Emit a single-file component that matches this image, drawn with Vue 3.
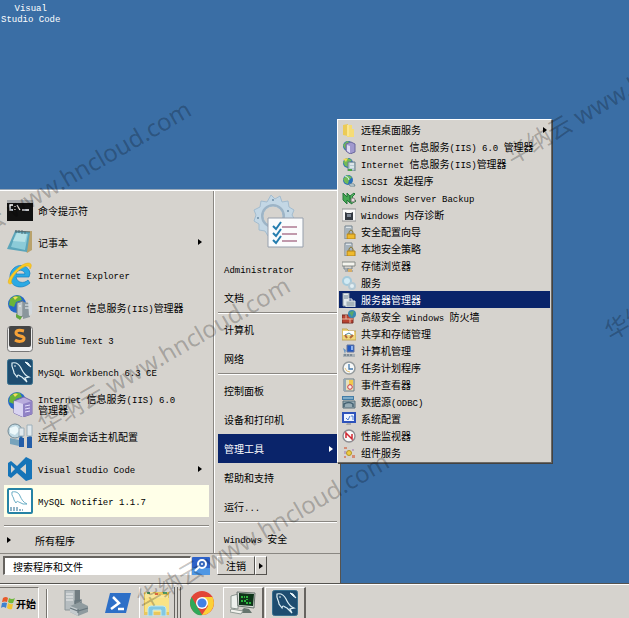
<script setup>
import { ref, h } from 'vue'

const Label = (props) =>
  h(
    'span',
    { class: 'label' },
    (props.text.match(/[\u4e00-\u9fff]+|[^\u4e00-\u9fff]+/g) || []).map((run) =>
      h('span', { class: /[\u4e00-\u9fff]/.test(run) ? 'han' : 'latin' }, run)
    )
  )
Label.props = ['text']

const search = ref('搜索程序和文件')

const globe = '<circle cx="10" cy="10" r="9" fill="#2468c8"/><path d="M3 5Q8 0 13 2L15 6 9 8 7 13 2 11Z" fill="#69b43b"/><path d="M12 9l5 1-3 7-3-3Z" fill="#8fce4c"/><path d="M6 3Q9 2 11 3L8 6Z" fill="#f6dc59"/>'
const dolphin = '<path d="M5 4C9 3 12 5 14 9 16 13 17 16 22 18L18 19 20 23 15 18C12 17 11 14 10 18L7 14C7 10 4 9 5 4Z" fill="none" stroke="#dff1f6" stroke-width="1.2"/><path d="M18 3l3 1 3 4-3-2Z" fill="#e9f6fa" stroke="#e9f6fa"/><circle cx="8" cy="7" r=".8" fill="#fff"/>'
const tower = '<path d="M3 1h7v13H3Z" fill="#dce3e8" stroke="#70808c"/><path d="M4 4h5M4 6h5M4 8h5" stroke="#6e8291"/>'
const mysql = '<rect x=".5" y=".5" width="25" height="25" rx="2" fill="#1e4d70" stroke="#38708e"/>' + dolphin

const programs = [
  { text: '命令提示符', icon: '<rect y="3" width="26" height="21" fill="#111"/><path d="M0 3h26v3H0Z" fill="#a6a8aa"/><path d="M6 8H3v5h3M8 9v1M8 12v1M10 8l3 5M15 13h7" fill="none" stroke="#fff" stroke-width="1.3"/>' },
  { text: '记事本', more: true, icon: '<path d="M8 3l17-1v19l-5 3Z" fill="#b9a26c"/><path d="M8 2l15 1-3 20L0 20Z" fill="#5ba5ba"/><path d="M9 4l12 1-3 16-14-3Z" fill="#8ccbd8"/><path d="M10 4l10 1-2 8-12-1Z" fill="#b5e1e6"/><path d="M8 2l15 1M9 1v3M12 1v3M15 1v4M18 2v3" stroke="#506d75"/>' },
  { text: 'Internet Explorer', icon: '<path d="M22 15H9c1 6 8 7 12 3l2 3C14 29 2 24 3 14 4 3 17 0 22 8q2 3 0 7M9 12h9c-1-5-8-5-9 0" fill="#2baae4" stroke="#147dbd" stroke-width=".7"/><path d="M4 22C-5 23 10 2 21 1c4 0 4 3 2 6 0-8-14 1-18 10-1 3-1 5 1 4" fill="#f9ca24" stroke="#e5a917" stroke-width=".5"/>' },
  { text: 'Internet 信息服务(IIS)管理器', icon: globe + '<path d="M10 9l6-2v15l-6 2Z" fill="#bfc7c9" stroke="#737d82"/><path d="M16 8l7 1v14l-7 2Z" fill="#8a969c"/><path d="M18 11h4M18 14h4M12 12h2" stroke="#eef7fa"/><path d="M9 20l6 3-2 3-4-3Z" fill="#62a83c"/><path d="M21 6l4 2v12l-3 2Z" fill="#d5dadd"/>' },
  { text: 'Sublime Text 3', icon: '<rect x=".5" y=".5" width="25" height="25" rx="3" fill="#eee" stroke="#777"/><rect x="2" y="0" width="22" height="21" rx="2" fill="#444"/><path d="M17 5q-8-2-8 2c0 4 9 2 8 6-1 3-6 3-9 1" fill="none" stroke="#f6a238" stroke-width="3"/>' },
  { text: 'MySQL Workbench 6.3 CE', icon: mysql },
  { text: 'Internet 信息服务(IIS) 6.0\n管理器', icon: globe + '<path d="M7 10l10-4 8 4v13l-9 3-9-4Z" fill="#b9addd" stroke="#786aad"/><path d="M7 10l9 3v13l-9-4Z" fill="#d9d4f1"/><path d="M16 13l9-3v13l-9 3Z" fill="#9183c5"/><path d="M18 15l5-1M18 18l5-1M18 21l5-1" stroke="#e7e0ff"/>' },
  { text: '远程桌面会话主机配置', icon: '<circle cx="8" cy="8" r="7" fill="#c1dae4" stroke="#738995"/><path d="M3 5l6-2 4 4-5 5-5-2Z" fill="#edf8fa"/><path d="M3 15l9 2v6l-9-2Z" fill="#77a3bb"/><path d="M14 7v17M23 2v22" stroke="#2769a9" stroke-width="3"/><path d="M12 5h5v8h-5ZM20 2h5v11h-5Z" fill="#e1e9ed" stroke="#9eb0ba"/><path d="M12 15h5v9h-5ZM20 14h5v11h-5Z" fill="#235da8"/>' },
  { text: 'Visual Studio Code', more: true, icon: '<path d="M19 1l6 3v19l-6 2-9-8-6 5-3-2V7l3-2 6 5Z" fill="#1674b8"/><path d="M19 8v10l-6-5ZM4 9v8l4-4Z" fill="#d6d3ce"/>' },
  { text: 'MySQL Notifier 1.1.7', active: true, icon: '<rect x="1" y="1" width="24" height="24" rx="1" fill="#fff" stroke="#2683a5" stroke-width="2"/><path d="M5 4C9 3 12 5 13 8 15 12 16 14 20 16L16 16 14 15C11 14 10 12 9 15L7 12C7 9 4 8 5 4Z" fill="none" stroke="#69adc5"/><path d="M3 20h8M3 22h13" stroke="#246a91" stroke-dasharray="2 1"/>' }
]

const places = [
  ['Administrator', '文档'],
  ['计算机', '网络'],
  ['控制面板', '设备和打印机', '管理工具', '帮助和支持', '运行...'],
  ['Windows 安全']
]

const smallGlobe = '<circle cx="6" cy="6" r="5" fill="#276fb8"/><path d="M1 5l4-4 5 2-3 3-1 4-3-1Z" fill="#72ba58"/>'
const lock = '<path d="M7 9V7q2-4 4 0v2" fill="none" stroke="#8a752b"/><path d="M5 9h8v5H5Z" fill="#efba2c" stroke="#af801b"/>'
const tools = [
  { text: '远程桌面服务', more: true, icon: '<path d="M1 2l5-1v12l-5-1Z" fill="#eccb56"/><path d="M5 2h5v4h2v8H5Z" fill="#f5dc76"/><path d="M6 2v11" stroke="#fff0a9"/>' },
  { text: 'Internet 信息服务(IIS) 6.0 管理器', icon: smallGlobe + '<path d="M4 4l5-2 4 2v8l-5 2-4-3Z" fill="#a099ce" stroke="#6b689d"/><path d="M5 5l3 1v7l-3-2Z" fill="#dedbf4"/>' },
  { text: 'Internet 信息服务(IIS)管理器', icon: smallGlobe + '<path d="M6 5h7v9H6Z" fill="#b8cbd3" stroke="#667f8a"/><path d="M8 7h4M8 10h4" stroke="#fff"/><path d="M1 2l5-1-2 4Z" fill="#efd857"/><path d="M6 12h4v2H6Z" fill="#4ba447"/>' },
  { text: 'iSCSI 发起程序', icon: smallGlobe + '<path d="M7 10h5l1 2H8Z" fill="#eef5f7" stroke="#6c8791"/><path d="M3 2q4 1 4 4" stroke="#d7f2ee" fill="none"/>' },
  { text: 'Windows Server Backup', icon: '<path d="M1 2l4 4V2l3 3v7L5 9v4L1 9Z" fill="#44a852" stroke="#27763b"/><path d="M13 3l-3 3 4 4-5 3-1-8 4-3Z" fill="#57b764" stroke="#27763b"/><circle cx="11" cy="9" r="2" fill="#e8dce0" stroke="#95868b"/>' },
  { text: 'Windows 内存诊断', icon: '<path d="M0 1h14v12H0Z" fill="#fafafa" stroke="#929292"/><path d="M3 4l2 1h4l2-1v8H3Z" fill="#343a42"/><path d="M5 6h4v3H5Z" fill="#7e8794"/>' },
  { text: '安全配置向导', icon: tower + lock },
  { text: '本地安全策略', icon: tower + lock },
  { text: '存储浏览器', icon: '<path d="M0 3h13v4H0Z" fill="#f4f4ee" stroke="#868a86"/><path d="M2 7v3h8V7M6 9v3M3 12h8" fill="none" stroke="#74828a"/><path d="M6 10h4v3H6Z" fill="#d6ad66"/>' },
  { text: '服务', icon: '<circle cx="5" cy="5" r="4" fill="#d3ebf4" stroke="#a4cadb" stroke-width="2"/><circle cx="10" cy="10" r="3" fill="#e2eff4" stroke="#b3c9d4" stroke-width="2"/>' },
  { text: '服务器管理器', active: true, icon: '<path d="M1 0h6v13H1Z" fill="#e4eaed" stroke="#8e9ba3"/><path d="M2 3h4M2 5h4" stroke="#6e8291"/><path d="M4 8h9v6H4Z" fill="#a7b4bb" stroke="#dfe7ea"/><path d="M6 8V6h4v2" stroke="#eee" fill="none"/>' },
  { text: '高级安全 Windows 防火墙', icon: '<path d="M0 5h11v8H0Z" fill="#b84130" stroke="#752d25"/><path d="M0 9h11M4 5v4M8 9v4" stroke="#e8bba5"/><circle cx="10" cy="4" r="4" fill="#3789b5"/><path d="M7 2l5-1-2 6Z" fill="#59a86b"/>' },
  { text: '共享和存储管理', icon: '<path d="M0 2h5l2 2h7v9H0Z" fill="#efd77b" stroke="#c2a456"/><path d="M1 4h11v4H1Z" fill="#fff"/><path d="M3 8l4-2 4 3" fill="none" stroke="#4f8c9b"/><path d="M3 8l2 3M11 8l-3 3" stroke="#b2673b" stroke-width="2"/>' },
  { text: '计算机管理', icon: '<path d="M5 1h7v7H5Z" fill="#2459c0" stroke="#67779d"/><path d="M9 2h2v4H9Z" fill="#8eb4f1"/><path d="M1 4l3 2-1 4Z" fill="#6b96c0"/><path d="M1 10h12v3H1Z" fill="#aab2b7"/><path d="M2 11h9" stroke="#536373" stroke-dasharray="2 1"/>' },
  { text: '任务计划程序', icon: '<circle cx="7" cy="7" r="6" fill="#f6f8f8" stroke="#959b9d" stroke-width="1.5"/><path d="M7 3v5h4" fill="none" stroke="#4479ad" stroke-width="1.3"/><path d="M3 7q1 4 5 4" fill="none" stroke="#e8c478"/>' },
  { text: '事件查看器', icon: '<path d="M2 1h10v12H2Z" fill="#e5e0bd" stroke="#687a88"/><path d="M2 1h2v12H2Z" fill="#92a8b7"/><path d="M7 2h4v5H7Z" fill="#f1c84c"/><circle cx="8" cy="9" r="2.3" fill="#f4efeb" stroke="#cb3840"/>' },
  { text: '数据源(ODBC)', icon: '<path d="M0 1h12v4H0Z" fill="#447da6"/><path d="M1 3h10" stroke="#b8dceb"/><path d="M1 6h12v7H1Z" fill="#97acb5" stroke="#586e79"/><path d="M2 12V9q5-3 9 0v3" stroke="#456272" fill="none" stroke-width="1.5"/>' },
  { text: '系统配置', icon: '<path d="M1 1h12v9H1Z" fill="#eef4ff" stroke="#2e53bb" stroke-width="2"/><path d="M4 6l2 2 2-4M9 4h2v4" fill="none" stroke="#4f7dd1"/><path d="M5 11h4v2H4" fill="#aaa"/>' },
  { text: '性能监视器', icon: '<circle cx="7" cy="7" r="6" fill="#f9fafa" stroke="#8c8c91" stroke-width="1.4"/><path d="M4 9V4l6 6V5" fill="none" stroke="#cf2832" stroke-width="1.5"/>' },
  { text: '组件服务', icon: '<circle cx="7" cy="7" r="2.5" fill="#efcc43" stroke="#b29227"/><path d="M2 1h3v2H2ZM10 9h3v3h-3ZM2 10h2v2H2Z" fill="#d48c75"/><path d="M10 4h2M3 5v3" stroke="#9b78b5"/>' }
]

const taskbar = [
  { name: '服务器管理器', kind: 'plain', icon: '<path d="M2 0h10v20H2Z" fill="#b6bdc0" stroke="#8a9497"/><path d="M12 0h5v15h-5Z" fill="#727d82"/><path d="M3 4h7M3 7h7M3 10h7" stroke="#eee"/><path d="M7 16l10-4 8 4v6l-10 4-8-4Z" fill="#8f9b9f"/><path d="M7 16l8 3v7l-8-4Z" fill="#c4cbce"/><path d="M12 14v-3l6-1v3M7 18l8 3 10-3M15 19v4" fill="none" stroke="#68777e" stroke-width="1.3"/>' },
  { name: 'PowerShell', kind: 'plain', icon: '<path d="M5 3h21l-5 20H0Z" fill="#2d6fc7"/><path d="M8 7l6 6-8 6M13 19h6" fill="none" stroke="#fff" stroke-width="2.5"/>' },
  { name: '资源管理器', kind: 'pressed', icon: '<path d="M0 2h25v23H0Z" fill="#e9c75c"/><path d="M1 2h8l2 3h13v4H1Z" fill="#f8e69b"/><path d="M1 8h24v14H1Z" fill="#f9e385"/><path d="M3 3h3M19 3h4" stroke="#4f9964" stroke-width="2"/><path d="M11 4h3" stroke="#d9653f" stroke-width="2"/><path d="M4 26v-7q0-3 3-3h12q3 0 3 3v7h-5v-6H9v6Z" fill="#83c8e2" stroke="#bfe9f4"/>' },
  { name: 'Chrome', kind: 'plain', icon: '<circle cx="13" cy="13" r="12" fill="#e24637"/><path d="M2.6 7l6 10.5 4.500 7.500C8 27 1 20 1 13q0-3 1.600-6" fill="#2fa858"/><path d="M13 7h10.500c4 8-1 18-10.500 18l6-9Z" fill="#fcd037"/><circle cx="13" cy="13" r="6" fill="#fff"/><circle cx="13" cy="13" r="4.600" fill="#4381e6"/>' },
  { name: '远程终端', kind: 'raised', icon: '<path d="M1 6l7-2v15l-7-1Z" fill="#edf1ed" stroke="#8b9690"/><path d="M7 2l18 1-1 15-16-2Z" fill="#d8ddd9" stroke="#69736e"/><path d="M9 3l15 1-1 12-14-1Z" fill="#0d3318"/><path d="M11 7h4M17 6v4M11 11h6M16 13h5" stroke="#2bb43c" stroke-width="2" stroke-dasharray="2 1"/><path d="M14 18l5 1 3 4H9Z" fill="#66746d"/><path d="M1 19l12 2-2 3-11-2Z" fill="#f2f2ed" stroke="#929b95"/>' },
  { name: 'MySQL', kind: 'raised', icon: mysql }
]

const marks = [[-55, 258], [44, 434], [143, 610], [512, 165], [611, 341]]
</script>

<template>
  <main class="desktop">
    <section class="workspace">
      <a class="shortcut" href="#"><Label :text="'Visual\nStudio Code'" /></a>

      <nav class="start-menu" aria-label="开始菜单">
        <div class="columns">
          <div class="programs">
            <div class="program-list">
              <button v-for="p in programs" :key="p.text" class="program" :class="{ active: p.active }">
                <svg class="program-icon" viewBox="0 0 26 26" v-html="p.icon"></svg>
                <Label :text="p.text" />
                <i v-if="p.more" class="arrow"></i>
              </button>
            </div>
            <hr class="rule" />
            <button class="all-programs"><i class="arrow"></i><Label text="所有程序" /></button>
          </div>

          <div class="places">
            <svg class="avatar" viewBox="0 0 54 54">
              <path fill-rule="evenodd" d="M20 1l4 4 5-3 2 6 6-1 1 6 5 3-2 5 3 5-5 3-1 6-6 1-3 5-6-2-6 3-3-5-6-1v-6l-5-3 2-6-2-5 6-3 1-6 6 1Zm2 11a10 10 0 1 0 0 20 10 10 0 0 0 0-20Z" fill="#c3d7e5" stroke="#a3bccf" />
              <circle cx="22" cy="22" r="11" fill="none" stroke="#9db4c6" stroke-width="2" />
              <circle cx="22" cy="6" r="1" fill="#6c8ca4" /><circle cx="7" cy="24" r="1" fill="#6c8ca4" /><circle cx="37" cy="17" r="1" fill="#6c8ca4" />
              <path d="M17 24h35v29H17Z" fill="#fafbfc" stroke="#969fac" />
              <path d="M31 33h15M31 40h15M31 47h15" stroke="#ad7a91" stroke-width="1.500" />
              <path d="M22 32l3 3 5-7M22 39l3 3 5-7M22 46l3 3 5-7" fill="none" stroke="#237cae" stroke-width="2" />
            </svg>
            <template v-for="(group, i) in places" :key="i">
              <hr v-if="i" class="rule" />
              <div v-for="name in group" :key="name" class="place-slot">
                <button class="place" :class="{ active: name === '管理工具' }">
                  <Label :text="name" />
                  <i v-if="name === '管理工具'" class="arrow"></i>
                </button>
                <div v-if="name === '管理工具'" class="submenu">
                  <button v-for="t in tools" :key="t.text" class="tool" :class="{ active: t.active }">
                    <svg class="tool-icon" viewBox="0 0 14 14" v-html="t.icon"></svg>
                    <Label :text="t.text" />
                    <i v-if="t.more" class="arrow"></i>
                  </button>
                </div>
              </div>
            </template>
          </div>
        </div>

        <div class="menu-footer">
          <form class="search" @submit.prevent>
            <input v-model="search" class="search-box" type="text" aria-label="搜索程序和文件" />
            <button class="search-button" aria-label="搜索">
              <svg viewBox="0 0 18 18">
                <rect width="18" height="18" rx="1" fill="#2e62c8" />
                <path d="M0 11h18v7H0Z" fill="#4f97e4" />
                <circle cx="10" cy="7" r="4" fill="#3768bc" stroke="#fff" stroke-width="2" />
                <circle cx="10" cy="7" r="1" fill="#fff" />
                <path d="M7 10l-4 4" stroke="#fff" stroke-width="2" />
              </svg>
            </button>
          </form>
          <div class="logoff">
            <button class="raised-button logoff-main"><Label text="注销" /></button>
            <button class="raised-button logoff-more" aria-label="更多"><i class="arrow"></i></button>
          </div>
        </div>
      </nav>
    </section>

    <footer class="taskbar">
      <button class="start-button">
        <svg class="flag" viewBox="0 0 14 14">
          <path d="M2 2q3-2 5 0L6 6Q4 5 1 6Z" fill="#e85a2a" /><path d="M8 2q3 2 6 0l-2 5q-3 1-5-1Z" fill="#70b83c" />
          <path d="M1 7q3-1 5 0l-1 5q-3-2-5 0Z" fill="#3e82d0" /><path d="M7 7q3 2 5 1l-1 5q-3 1-5-1Z" fill="#f3c430" />
        </svg>
        <span>开始</span>
      </button>
      <i class="grip"></i>
      <button v-for="b in taskbar" :key="b.name" class="task" :class="b.kind" :aria-label="b.name">
        <svg class="task-icon" viewBox="0 0 26 26" v-html="b.icon"></svg>
      </button>
    </footer>

    <svg class="watermark" aria-hidden="true">
      <text v-for="(m, i) in marks" :key="i" :transform="`translate(${m[0]} ${m[1]}) rotate(-30)`">华纳云 www.hncloud.com</text>
    </svg>
  </main>
</template>

<style>
body {
  background: #3a6ea5;
}
.label {
  white-space: pre;
  text-align: left;
}
.label .latin {
  font-family: 'Liberation Mono', monospace;
  font-size: 9px;
  line-height: 1px;
}
</style>

<style scoped>
.desktop {
  position: relative;
  display: flex;
  flex-direction: column;
  min-height: 100vh;
  overflow: hidden;
  background: #3a6ea5;
  color: #000;
  font: 10px/11px 'Noto Sans CJK SC', sans-serif;
}
button {
  display: flex;
  align-items: center;
  border: 0;
  padding: 0;
  background: none;
  color: inherit;
  font: inherit;
}
svg {
  flex: none;
  display: block;
}
.workspace {
  flex: 1;
  display: flex;
  flex-direction: column;
  justify-content: space-between;
  align-items: flex-start;
}
.shortcut {
  padding: 1px;
  color: #fff;
  text-decoration: none;
}
.shortcut .label {
  display: block;
  text-align: center;
}
.start-menu {
  width: 341px;
  box-sizing: border-box;
  border-top: 1px solid #fff;
  border-right: 1px solid #55534f;
  background: #d6d3ce;
  box-shadow: 0 -1px #9aa9b8;
}
.columns {
  display: grid;
  grid-template-columns: 213px 1fr;
  border-bottom: 1px solid #8a8782;
}
.programs {
  display: flex;
  flex-direction: column;
  padding: 3px 4px 0;
}
.program-list {
  flex: 1;
  display: flex;
  flex-direction: column;
}
.program {
  flex: 1;
  gap: 5px;
  padding: 0 7px 0 3px;
}
.program.active {
  background: #ffffe8;
}
.program-icon {
  width: 26px;
  height: 26px;
}
.arrow {
  flex: none;
  margin-left: auto;
  border: 3px solid transparent;
  border-left: 4px solid currentColor;
  border-right: 0;
}
.rule {
  align-self: stretch;
  margin: 0 0 1px;
  border: 0;
  border-top: 1px solid #8a8782;
  border-bottom: 1px solid #fff;
}
.programs .rule {
  margin: 8px 0 0;
}
.all-programs {
  gap: 24px;
  height: 26px;
  padding-left: 3px;
}
.all-programs .arrow {
  margin-left: 0;
}
.places {
  display: flex;
  flex-direction: column;
  padding: 3px 3px 0 4px;
  border-left: 1px solid #8a8782;
  box-shadow: inset 1px 0 #fff;
}
.avatar {
  align-self: center;
  width: 54px;
  height: 54px;
  margin-bottom: 6px;
}
.place-slot {
  position: relative;
}
.place {
  width: 100%;
  height: 29px;
  padding: 0 4px 0 6px;
}
.place.active,
.tool.active {
  background: #0a246a;
  color: #fff;
}
.submenu {
  position: absolute;
  z-index: 2;
  left: 100%;
  bottom: 0;
  width: 215px;
  box-sizing: border-box;
  padding: 1px;
  border: 1px solid #fff;
  border-right-color: #6c6a66;
  border-bottom-color: #6c6a66;
  background: #d6d3ce;
  box-shadow: 1px 1px #44423f;
}
.tool {
  width: 100%;
  height: 17px;
  gap: 5px;
  padding: 0 3px;
}
.tool-icon {
  width: 14px;
  height: 14px;
}
.menu-footer {
  display: flex;
  gap: 7px;
  padding: 2px 4px 8px 3px;
}
.search {
  display: flex;
  gap: 1px;
  flex: 0 0 207px;
}
.search-box {
  flex: 1;
  min-width: 0;
  box-sizing: border-box;
  height: 19px;
  padding: 0 8px;
  border: 1px solid #fff;
  border-top: 2px solid #66635f;
  border-left: 2px solid #66635f;
  background: #fff;
  color: #000;
  font: inherit;
}
.search-button svg {
  width: 18px;
  height: 18px;
}
.logoff {
  display: flex;
}
.raised-button {
  justify-content: center;
  height: 19px;
  border: 1px solid #fff;
  border-right-color: #55534f;
  border-bottom-color: #55534f;
}
.logoff-main {
  width: 38px;
}
.logoff-more {
  width: 12px;
}
.logoff-more .arrow {
  margin: 0;
}
.taskbar {
  display: flex;
  align-items: stretch;
  gap: 1px;
  height: 35px;
  box-sizing: border-box;
  padding-top: 3px;
  border-top: 1px solid #55534f;
  background: #d6d3ce;
  box-shadow: inset 0 1px #fff;
}
.start-button {
  gap: 1px;
  width: 39px;
  padding-left: 1px;
  border: 1px solid #77746f;
  border-right-color: #fff;
  border-bottom: 0;
  border-left: 0;
  font-weight: bold;
}
.flag {
  width: 14px;
  height: 14px;
}
.grip {
  width: 1px;
  margin: 2px 7px 0 6px;
  background: #77746f;
  box-shadow: 1px 0 #fff;
}
.task {
  justify-content: center;
  width: 41px;
}
.task-icon {
  width: 26px;
  height: 26px;
}
.task.pressed {
  width: 36px;
  margin-right: 5px;
  border-left: 1px solid #fff;
  border-right: 1px solid #66635f;
  box-shadow: 2px 0 #d6d3ce, 3px 0 #66635f, 5px 0 #d6d3ce, 6px 0 #66635f;
}
.task.raised {
  border: 1px solid #fff;
  border-right: 2px solid #66635f;
  border-bottom: 0;
}
.watermark {
  position: absolute;
  z-index: 3;
  inset: 0;
  width: 100%;
  height: 100%;
  pointer-events: none;
  fill: #000;
  fill-opacity: 0.24;
  font: 24px 'Noto Sans', 'Noto Sans CJK SC', sans-serif;
}
</style>
